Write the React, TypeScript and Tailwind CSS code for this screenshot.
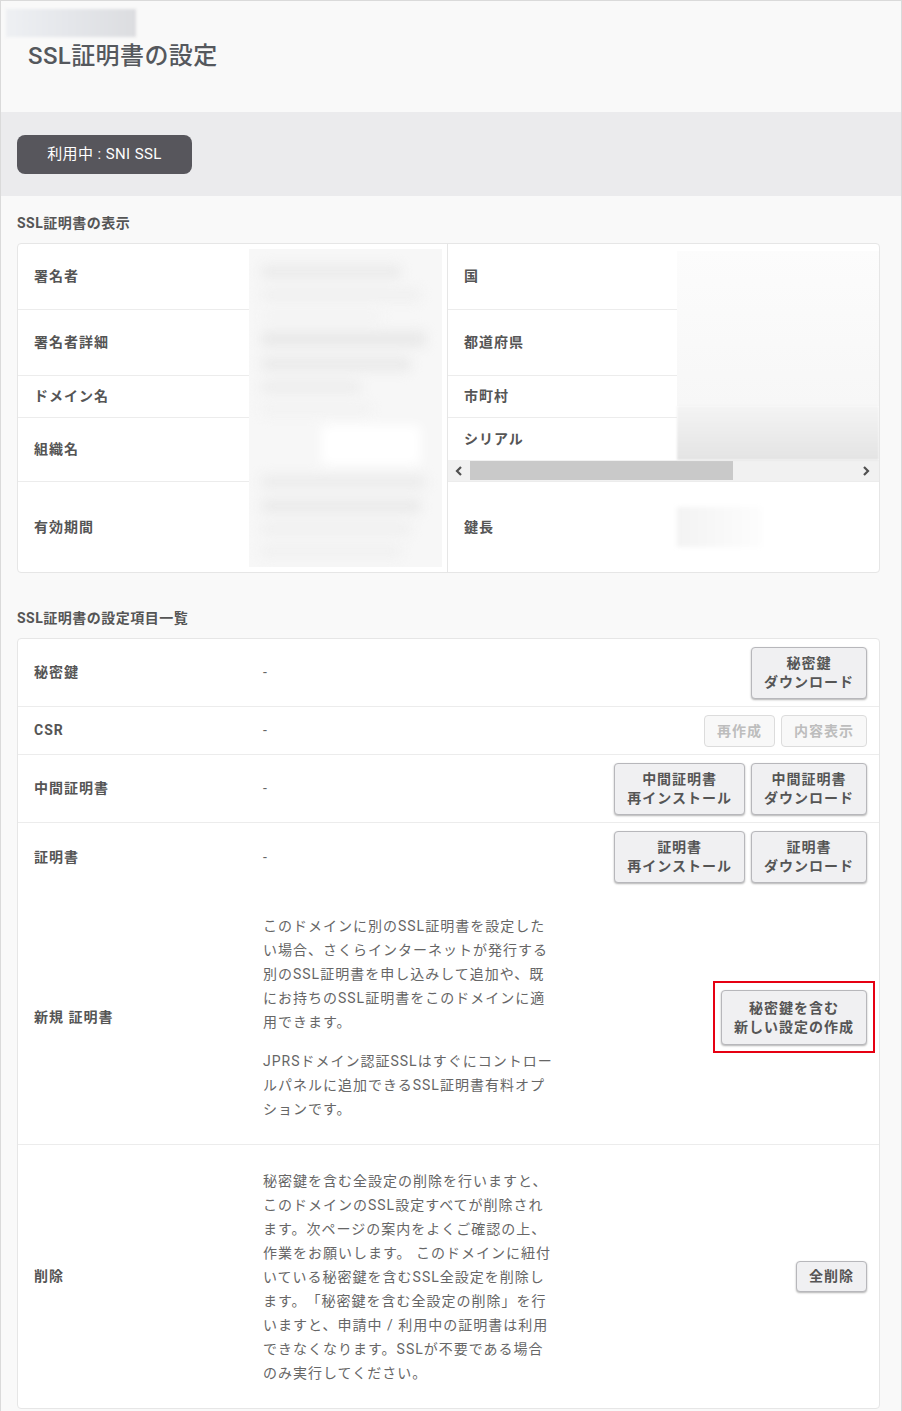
import React from "react";

const font = { fontFamily: '"Roboto","Noto Sans CJK JP",sans-serif' };

function Btn({ lines, disabled, className = "" }: { lines: string[]; disabled?: boolean; className?: string }) {
  const base = disabled
    ? "border-[#dcdcdc] bg-[#f8f8f8] text-[#bdbdbd] py-[5px] leading-[20px]"
    : "border-[#b7b7bb] bg-[#f0f0f2] text-[#555555] shadow-[0_1px_2px_rgba(0,0,0,0.3)] py-[6px] leading-[19px]";
  return (
    <button className={`rounded-[4px] border px-3 text-[14px] font-bold tracking-[1px] whitespace-nowrap text-center ${base} ${className}`}>
      {lines.map((l, i) => (
        <div key={i}>{l}</div>
      ))}
    </button>
  );
}

function LabelCell({ text, h, border = true, w }: { text: string; h: string; border?: boolean; w: string }) {
  return (
    <div className={`flex items-center pl-4 ${h} ${w} ${border ? "border-b border-[#ececec]" : ""}`}>
      <span className="text-[14px] font-bold tracking-[1px] text-[#555555]">{text}</span>
    </div>
  );
}

function Blur({ className = "" }: { className?: string }) {
  return <div className={`rounded-sm ${className}`} />;
}

export default function App() {
  return (
    <div style={font} className="w-[902px] min-h-[1411px] border border-[#dadada] bg-[#f9f9f9] text-[#555555] [text-spacing-trim:space-all]">
      {/* header */}
      <div className="h-[111px] pt-[8px] pl-[5px]">
        <div className="h-[28px] w-[130px] bg-gradient-to-r from-[#eef0f3] via-[#e4e6ea] to-[#dcdde0] blur-[1.5px]" />
        <div className="mt-[3px] pl-[22px] text-[24px] font-medium leading-[32px] tracking-[0.4px] text-[#55585d]">SSL証明書の設定</div>
      </div>
      {/* band */}
      <div className="h-[84px] bg-[#ebebed] px-4 pt-[23px]">
        <div className="flex h-[39px] w-[175px] items-center justify-center rounded-[8px] bg-[#57565c] text-[15px] tracking-[0.4px] text-white">
          利用中 : SNI SSL
        </div>
      </div>

      <div className="pl-4 pr-[21px] pb-[2px]">
        <div className="mt-[17px] h-[20px] text-[14px] font-bold leading-[20px] tracking-[0.5px] text-[#555555]">SSL証明書の表示</div>
        {/* card 1 */}
        <div className="mt-[10px] flex overflow-hidden rounded-[4px] border border-[#e6e6e6] bg-white">
          {/* left */}
          <div className="flex w-[430px] shrink-0 border-r border-[#e6e6e6]">
            <div className="flex shrink-0 flex-col">
              <LabelCell w="w-[231px]" h="h-[66px]" text="署名者" />
              <LabelCell w="w-[231px]" h="h-[66px]" text="署名者詳細" />
              <LabelCell w="w-[231px]" h="h-[42px]" text="ドメイン名" />
              <LabelCell w="w-[231px]" h="h-[64px]" text="組織名" />
              <LabelCell w="w-[231px]" h="h-[90px]" text="有効期間" border={false} />
            </div>
            <div className="min-w-0 flex-1 py-[5px] pr-[5px]">
              <div className="h-full overflow-hidden bg-[#f7f7f7]">
                <div className="flex h-full flex-col gap-[10px] px-3 pt-4 blur-[6px]">
                  <Blur className="h-[14px] w-[140px] bg-[#ebebeb]" />
                  <Blur className="h-[12px] w-[160px] bg-[#efefef]" />
                  <Blur className="h-[10px] w-[120px] bg-[#f2f2f2]" />
                  <Blur className="h-[16px] w-[165px] bg-[#e9e9e9]" />
                  <Blur className="h-[14px] w-[150px] bg-[#eaeaea]" />
                  <Blur className="h-[12px] w-[100px] bg-[#ececec]" />
                  <Blur className="h-[12px] w-[110px] bg-[#f2f2f2]" />
                  <Blur className="ml-[60px] h-[40px] w-[100px] bg-[#ffffff]" />
                  <Blur className="h-[14px] w-[165px] bg-[#ececec]" />
                  <Blur className="h-[14px] w-[160px] bg-[#eaeaea]" />
                  <Blur className="h-[12px] w-[150px] bg-[#efefef]" />
                  <Blur className="h-[12px] w-[140px] bg-[#f0f0f0]" />
                </div>
              </div>
            </div>
          </div>
          {/* right */}
          <div className="flex min-w-0 flex-1 flex-col">
            <div className="flex h-[216px]">
              <div className="flex shrink-0 flex-col">
                <LabelCell w="w-[229px]" h="h-[66px]" text="国" />
                <LabelCell w="w-[229px]" h="h-[66px]" text="都道府県" />
                <LabelCell w="w-[229px]" h="h-[42px]" text="市町村" />
                <LabelCell w="w-[229px]" h="h-[42px]" text="シリアル" border={false} />
              </div>
              <div className="flex min-w-0 flex-1 flex-col pt-[7px]">
                <div className="h-[155px] bg-gradient-to-b from-[#fcfcfc] to-[#f7f7f7]" />
                <div className="flex-1 bg-gradient-to-b from-[#f4f4f4] to-[#e4e4e4] blur-[1px]" />
              </div>
            </div>
            {/* scrollbar */}
            <div className="flex h-[21px] items-center bg-[#f1f1f1]">
              <div className="flex w-[22px] items-center justify-center">
                <svg width="8" height="10" viewBox="0 0 8 10"><path d="M6 1 L2 5 L6 9" stroke="#505050" strokeWidth="2.2" fill="none" /></svg>
              </div>
              <div className="h-[19px] w-[263px] bg-[#c9c9c9]" />
              <div className="flex-1" />
              <div className="flex w-[26px] items-center justify-center">
                <svg width="8" height="10" viewBox="0 0 8 10"><path d="M2 1 L6 5 L2 9" stroke="#505050" strokeWidth="2.2" fill="none" /></svg>
              </div>
            </div>
            <div className="flex h-[91px] items-center border-t border-[#ececec]">
              <div className="w-[229px] shrink-0 pl-4 text-[14px] font-bold tracking-[1px] text-[#555555]">鍵長</div>
              <div className="h-[40px] w-[85px] bg-gradient-to-r from-[#f3f3f3] to-[#fdfdfd] blur-[2px]" />
            </div>
          </div>
        </div>

        <div className="mt-[35px] h-[20px] text-[14px] font-bold leading-[20px] tracking-[0.5px] text-[#555555]">SSL証明書の設定項目一覧</div>
        {/* card 2 */}
        <div className="mt-[10px] rounded-[4px] border border-[#e6e6e6] bg-white">
          <Row h="h-[68px]" label="秘密鍵" value="-" border>
            <Btn lines={["秘密鍵", "ダウンロード"]} />
          </Row>
          <Row h="h-[48px]" label="CSR" value="-" border>
            <Btn disabled lines={["再作成"]} />
            <Btn disabled lines={["内容表示"]} />
          </Row>
          <Row h="h-[68px]" label="中間証明書" value="-" border>
            <Btn lines={["中間証明書", "再インストール"]} />
            <Btn lines={["中間証明書", "ダウンロード"]} />
          </Row>
          <Row h="h-[68px]" label="証明書" value="-">
            <Btn lines={["証明書", "再インストール"]} />
            <Btn lines={["証明書", "ダウンロード"]} />
          </Row>
          <Row
            h="h-[254px]"
            label="新規 証明書"
            border
            value={
              <div className="py-[22px]">
                <p className="whitespace-nowrap text-[14px] leading-[24px] tracking-[1px] text-[#666666]">
                  このドメインに別のSSL証明書を設定した<br />
                  い場合、さくらインターネットが発行する<br />
                  別のSSL証明書を申し込みして追加や、既<br />
                  にお持ちのSSL証明書をこのドメインに適<br />
                  用できます。
                </p>
                <p className="mt-[15px] whitespace-nowrap text-[14px] leading-[24px] tracking-[1px] text-[#666666]">
                  JPRSドメイン認証SSLはすぐにコントロー<br />
                  ルパネルに追加できるSSL証明書有料オプ<br />
                  ションです。
                </p>
              </div>
            }
          >
            <div className="relative">
              <div className="pointer-events-none absolute -bottom-[8px] -left-[8px] -right-[8px] -top-[9px] border-2 border-[#e60012]" />
              <Btn lines={["秘密鍵を含む", "新しい設定の作成"]} className="!py-[7.5px]" />
            </div>
          </Row>
          <Row
            h="h-[263px]"
            label="削除"
            value={
              <p className="whitespace-nowrap py-[23px] text-[14px] leading-[24px] tracking-[1px] text-[#666666]">
                秘密鍵を含む全設定の削除を行いますと、<br />
                このドメインのSSL設定すべてが削除され<br />
                ます。次ページの案内をよくご確認の上、<br />
                作業をお願いします。 このドメインに紐付<br />
                いている秘密鍵を含むSSL全設定を削除し<br />
                ます。「秘密鍵を含む全設定の削除」を行<br />
                いますと、申請中 / 利用中の証明書は利用<br />
                できなくなります。SSLが不要である場合<br />
                のみ実行してください。
              </p>
            }
          >
            <button className="rounded-[4px] border border-[#b7b7bb] bg-[#f0f0f2] px-3 py-[5px] text-[14px] font-bold leading-[19px] tracking-[1px] text-[#555555] shadow-[0_1px_2px_rgba(0,0,0,0.3)]">
              全削除
            </button>
          </Row>
        </div>
      </div>
    </div>
  );
}

function Row({
  h,
  label,
  value,
  border,
  children,
}: {
  h: string;
  label: string;
  value: React.ReactNode;
  border?: boolean;
  children?: React.ReactNode;
}) {
  return (
    <div className={`flex items-center ${h} ${border ? "border-b border-[#ececec]" : ""}`}>
      <div className="w-[245px] shrink-0 pl-4 text-[14px] font-bold tracking-[1px] text-[#555555]">{label}</div>
      <div className="min-w-0 flex-1 text-[14px] text-[#666666]">{value}</div>
      <div className="flex items-center gap-[6px] pr-3">{children}</div>
    </div>
  );
}
